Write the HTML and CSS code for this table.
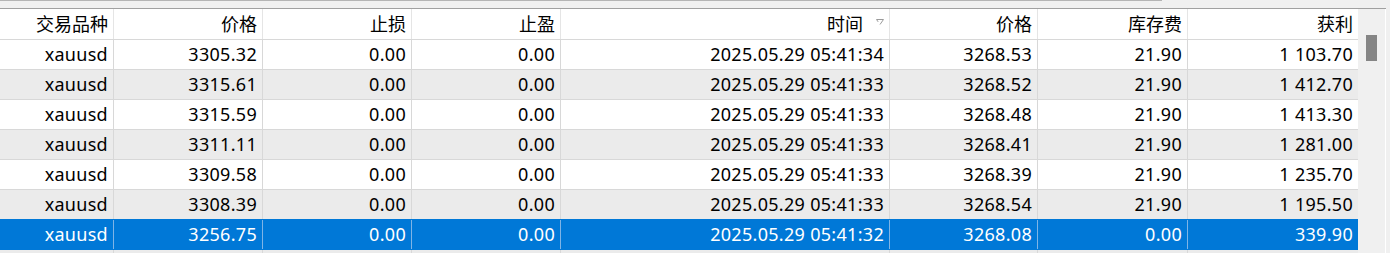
FILE: index.html
```html
<!DOCTYPE html>
<html lang="zh">
<head>
<meta charset="utf-8">
<title>Trades</title>
<link rel="stylesheet" href="styles.css">
</head>
<body>
<div class="hscroll"><div class="hthumb"></div></div>
<div class="frame">
  <div class="grid">
    <div class="row head">
      <div class="cell">交易品种</div>
      <div class="cell">价格</div>
      <div class="cell">止损</div>
      <div class="cell">止盈</div>
      <div class="cell sorted">时间<svg class="sort" width="8" height="6" viewBox="0 0 8 6"><path d="M0.5 0.5 H7.5 L4 5.5 M0.5 0.5 L2.2 2.9" fill="none" stroke="#9a9a9a" stroke-width="1"/></svg></div>
      <div class="cell">价格</div>
      <div class="cell">库存费</div>
      <div class="cell">获利</div>
    </div>
    <div class="row">
      <div class="cell">xauusd</div><div class="cell">3305.32</div><div class="cell">0.00</div><div class="cell">0.00</div><div class="cell">2025.05.29 05:41:34</div><div class="cell">3268.53</div><div class="cell">21.90</div><div class="cell">1 103.70</div>
    </div>
    <div class="row alt">
      <div class="cell">xauusd</div><div class="cell">3315.61</div><div class="cell">0.00</div><div class="cell">0.00</div><div class="cell">2025.05.29 05:41:33</div><div class="cell">3268.52</div><div class="cell">21.90</div><div class="cell">1 412.70</div>
    </div>
    <div class="row">
      <div class="cell">xauusd</div><div class="cell">3315.59</div><div class="cell">0.00</div><div class="cell">0.00</div><div class="cell">2025.05.29 05:41:33</div><div class="cell">3268.48</div><div class="cell">21.90</div><div class="cell">1 413.30</div>
    </div>
    <div class="row alt">
      <div class="cell">xauusd</div><div class="cell">3311.11</div><div class="cell">0.00</div><div class="cell">0.00</div><div class="cell">2025.05.29 05:41:33</div><div class="cell">3268.41</div><div class="cell">21.90</div><div class="cell">1 281.00</div>
    </div>
    <div class="row">
      <div class="cell">xauusd</div><div class="cell">3309.58</div><div class="cell">0.00</div><div class="cell">0.00</div><div class="cell">2025.05.29 05:41:33</div><div class="cell">3268.39</div><div class="cell">21.90</div><div class="cell">1 235.70</div>
    </div>
    <div class="row alt">
      <div class="cell">xauusd</div><div class="cell">3308.39</div><div class="cell">0.00</div><div class="cell">0.00</div><div class="cell">2025.05.29 05:41:33</div><div class="cell">3268.54</div><div class="cell">21.90</div><div class="cell">1 195.50</div>
    </div>
    <div class="row selected">
      <div class="cell">xauusd</div><div class="cell">3256.75</div><div class="cell">0.00</div><div class="cell">0.00</div><div class="cell">2025.05.29 05:41:32</div><div class="cell">3268.08</div><div class="cell">0.00</div><div class="cell">339.90</div>
    </div>
    <div class="row alt">
      <div class="cell"></div><div class="cell"></div><div class="cell"></div><div class="cell"></div><div class="cell"></div><div class="cell"></div><div class="cell"></div><div class="cell"></div>
    </div>
  </div>
  <div class="vscroll"><div class="vthumb"></div></div>
  <div class="edge"></div>
</div>
</body>
</html>
```

FILE: styles.css
```css
html, body {
  margin: 0;
  padding: 0;
  height: 253px;
  overflow: hidden;
  background: #f0f0f0;
}
body {
  font-family: "Noto Sans", "Noto Sans CJK SC", sans-serif;
  font-size: 18px;
  color: #000;
}
.hscroll {
  height: 8px;
  background: #f0f0f0;
}
.hthumb {
  width: 1162px;
  height: 1px;
  background: #b4b4b4;
}
.frame {
  display: flex;
  width: 1386px;
  border-top: 1px solid #a0a0a0;
  height: 244px;
  overflow: hidden;
}
.grid {
  width: 1359px;
  background: #fff;
  display: flex;
  flex-direction: column;
  overflow: hidden;
}
.row {
  display: grid;
  grid-template-columns: 114px 149px 149px 149px 329px 148px 150px 171px;
  height: 30px;
  flex: none;
  box-sizing: border-box;
  border-bottom: 1px solid #d8d8d8;
  background: #fff;
  letter-spacing: 0.3px;
}
.row.head {
  height: 31px;
  border-bottom: 1px solid #d8d8d8;
  letter-spacing: 0;
}
.row.alt {
  background: #ebebeb;
}
.row.selected {
  background: #0078d7;
  color: #fff;
  border-bottom-color: #0078d7;
  margin-top: -1px;
  height: 31px;
  padding-top: 1px;
}
.cell {
  box-sizing: border-box;
  border-right: 1px solid #d8d8d8;
  padding-right: 5px;
  text-align: right;
  line-height: 29px;
  white-space: nowrap;
  overflow: hidden;
}
.head .cell {
  line-height: 30px;
  border-right-color: #e5e5e5;
}
.selected .cell {
  border-right-color: #7fb4e6;
}
.head .cell.sorted {
  display: flex;
  justify-content: flex-end;
  align-items: center;
  gap: 13px;
}
.sort {
  display: block;
  margin-top: -5px;
}
.vscroll {
  width: 27px;
  background: #f0f0f0;
  padding: 26px 0 0 8px;
  box-sizing: border-box;
}
.vthumb {
  width: 11px;
  height: 26px;
  background: #858585;
}
.edge {
  width: 1px;
  background: #fff;
}
```
